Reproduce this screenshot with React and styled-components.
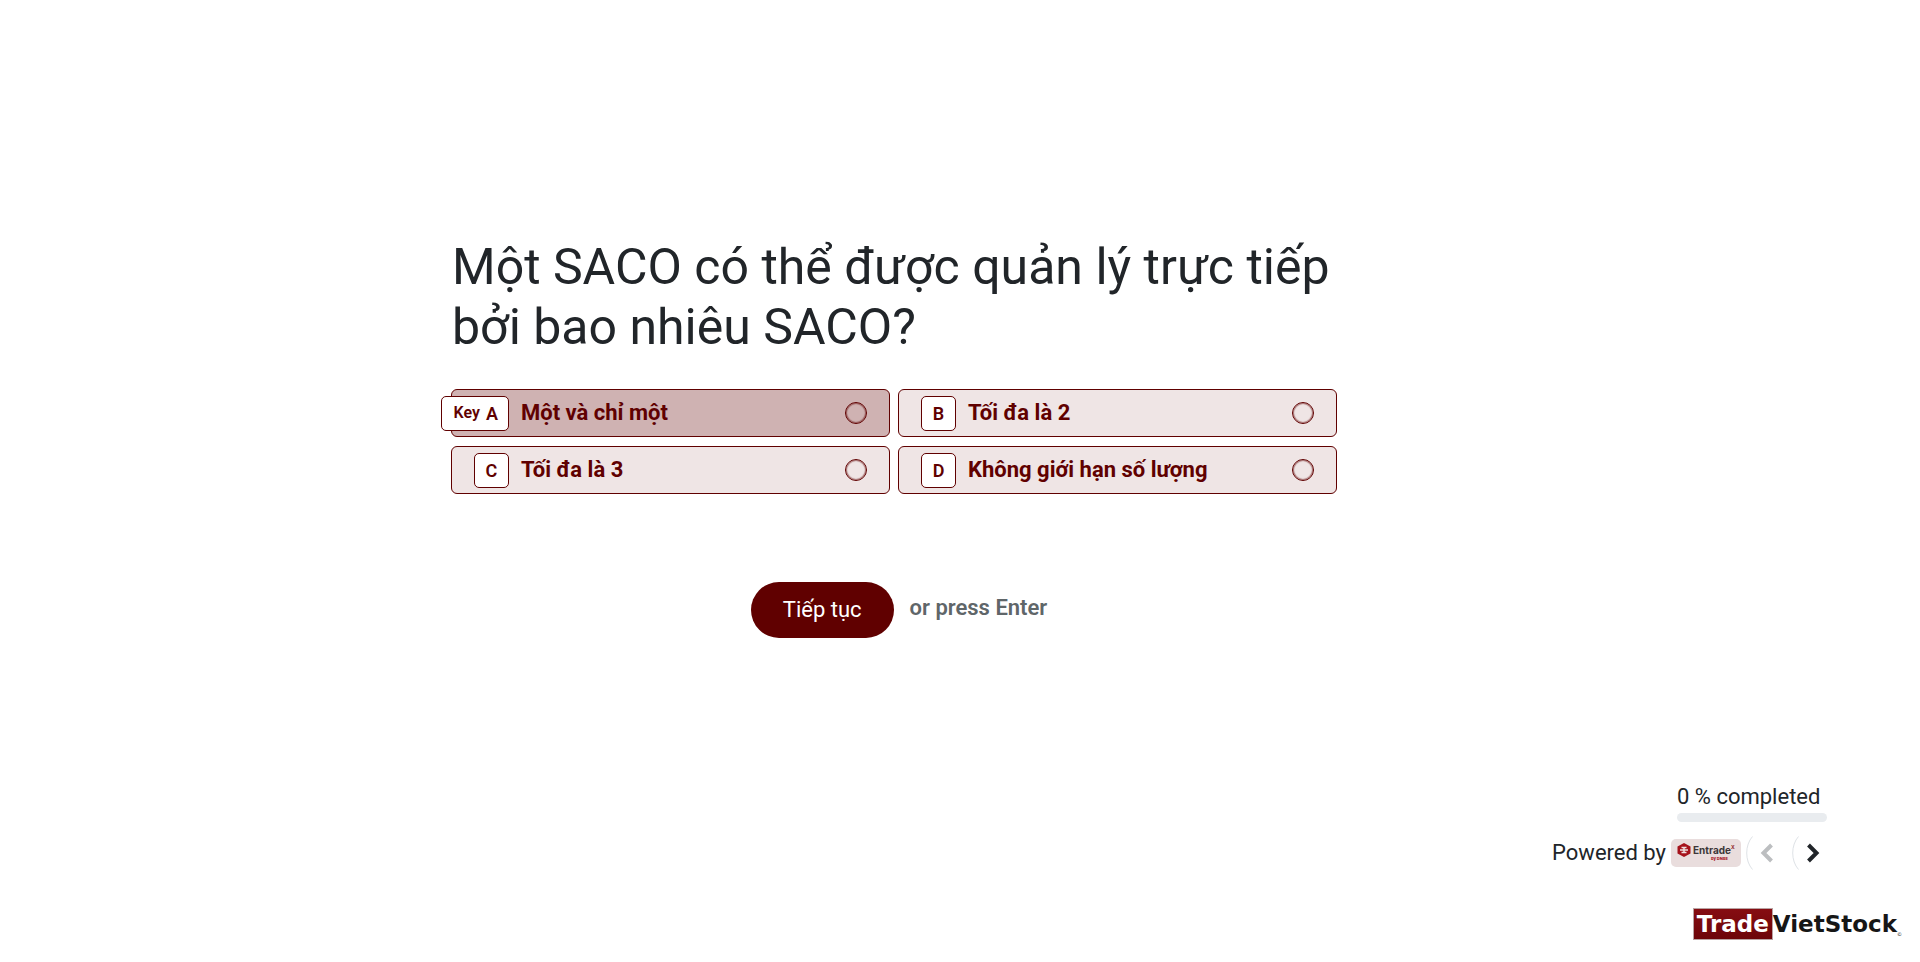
import React, { useState } from 'react'
import styled, { createGlobalStyle } from 'styled-components'

const GlobalStyle = createGlobalStyle`
  * {
    box-sizing: border-box;
  }
  body {
    margin: 0;
    background: #fff;
    color: #212529;
    font-family: Roboto, "Noto Sans", sans-serif;
    font-size: 22px;
    line-height: 32px;
  }
  button, input {
    font: inherit;
  }
`

const Page = styled.div`
  display: flex;
  flex-direction: column;
  min-height: 100vh;
`

const Survey = styled.main`
  flex: 1;
  padding: 237px 132px 32px 0;
`

const Form = styled.form`
  width: 100%;
  max-width: 886px;
  margin: 0 auto;
`

const Title = styled.h1`
  margin: 0 0 32px;
  padding: 0 1px;
  font-size: 50px;
  font-weight: 400;
  line-height: 60px;
`

const Answers = styled.div`
  display: grid;
  grid-template-columns: 1fr 1fr;
  gap: 9px 8px;
`

const Answer = styled.label`
  position: relative;
  display: flex;
  align-items: center;
  height: 48px;
  padding: 0 22px;
  border: 1px solid #600000;
  border-radius: 6px;
  background: ${({ $active }) => ($active ? '#cfb2b2' : '#efe5e5')};
  color: #600000;
  font-weight: 700;
  cursor: pointer;
`

const Key = styled.span`
  flex: none;
  width: 35px;
  height: 35px;
  border: 1px solid #600000;
  border-radius: 5px;
  background: #fff;
  font-size: 18px;
  font-weight: 600;
  line-height: 33px;
  text-align: center;
`

const WideKey = styled(Key)`
  position: absolute;
  left: -11px;
  display: flex;
  justify-content: flex-end;
  gap: 6px;
  width: 68px;
  padding-right: 10px;
`

const KeyHint = styled.small`
  font-size: 16px;
  line-height: 31px;
`

const AnswerText = styled.span`
  flex: 1;
  padding: 0 12px;
  margin-left: ${({ $shifted }) => ($shifted ? '35px' : '0')};
`

const Radio = styled.input`
  appearance: none;
  width: 22px;
  height: 22px;
  margin: 0;
  border: 1px solid #600000;
  border-radius: 50%;
  box-shadow: inset 0 0 1px 1px rgba(96, 0, 0, 0.5);
  &:checked {
    background: #600000;
  }
`

const Actions = styled.div`
  display: flex;
  align-items: center;
  justify-content: center;
  gap: 16px;
  margin-top: 88px;
  padding-left: 10px;
`

const Submit = styled.button`
  height: 56px;
  padding: 0 32px;
  border: 0;
  border-radius: 28px;
  background: #600000;
  color: #fff;
`

const EnterHint = styled.span`
  padding-bottom: 4px;
  color: #5f6669;
  font-weight: 600;
`

const Footer = styled.footer`
  display: flex;
  flex-direction: column;
  align-items: flex-end;
  padding: 0 18px 22px;
`

const Progress = styled.div`
  width: 150px;
  margin-right: 75px;
`

const Track = styled.div`
  height: 9px;
  border-radius: 5px;
  background: #e9ecef;
  overflow: hidden;
`

const Bar = styled.div`
  height: 100%;
  background: #600000;
`

const Powered = styled.div`
  display: flex;
  align-items: center;
  height: 34px;
  margin: 14px 75px 38px 0;
`

const Badge = styled.a`
  display: flex;
  align-items: center;
  width: 70px;
  height: 28px;
  margin: 0 5px;
  padding: 0 6px;
  border-radius: 5px;
  background: #e9dddd;
`

const Arrow = styled.button`
  display: flex;
  align-items: center;
  justify-content: flex-start;
  gap: 7px;
  width: 35px;
  height: 34px;
  margin-right: ${({ $last }) => ($last ? '0' : '11px')};
  padding: 0;
  border: 0;
  background: none;
  color: ${({ disabled }) => (disabled ? '#bcbec0' : '#212529')};
`

const Brand = styled.a`
  display: flex;
  align-items: center;
  color: #161616;
  font-family: "DejaVu Sans", sans-serif;
  font-size: 23px;
  font-weight: 700;
  line-height: 30px;
  text-decoration: none;
`

const BrandTag = styled.span`
  height: 32px;
  padding: 0 3px;
  border: 1px solid #b9a3a3;
  background: linear-gradient(#860d12, #6d0509);
  color: #fff;
`

const Copyright = styled.small`
  align-self: flex-end;
  font-size: 5px;
  font-weight: 400;
  line-height: 12px;
`

const answers = [
  { key: 'A', text: 'Một và chỉ một' },
  { key: 'B', text: 'Tối đa là 2' },
  { key: 'C', text: 'Tối đa là 3' },
  { key: 'D', text: 'Không giới hạn số lượng' },
]

const Arc = () => (
  <svg width="7" height="34" viewBox="0 0 7 34" fill="none" stroke="#dee2e6">
    <path d="M6.500 .5 C-1.200 9 -1.200 25 6.500 33.500" />
  </svg>
)

const Chevron = ({ flip }) => (
  <svg width="14" height="20" viewBox="0 0 14 20" fill="none" stroke="currentColor" strokeWidth="4">
    <path d={flip ? 'M11.5 2 L3.5 10 L11.5 18' : 'M2.5 2 L10.5 10 L2.5 18'} />
  </svg>
)

const EntradeLogo = () => (
  <svg width="58" height="22" viewBox="0 0 58 22">
    <path d="M7 1 L13.500 4.500 V11.500 L7 15 L.5 11.500 V4.500 Z" fill="#a5121b" />
    <path d="M4.500 5.500 H9.500 M4.500 10.500 H9.500 M3 8 H11 M7 5 V11" stroke="#eedfdf" strokeWidth="1.500" />
    <text x="16" y="12" fontFamily="Inter" fontSize="10" fontWeight="700" fill="#3c3638">Entrade</text>
    <text x="54" y="7" fontFamily="Inter" fontSize="5" fontWeight="700" fill="#8b1a22">X</text>
    <text x="34" y="18" fontFamily="Inter" fontSize="4" fontWeight="800" fill="#a5121b">by DNSE</text>
  </svg>
)

const App = () => {
  const [selected, setSelected] = useState('')
  const progress = 0

  return (
    <Page>
      <GlobalStyle />
      <Survey>
        <Form onSubmit={e => e.preventDefault()}>
          <Title>Một SACO có thể được quản lý trực tiếp bởi bao nhiêu SACO?</Title>
          <Answers>
            {answers.map(({ key, text }, index) => (
              <Answer key={key} $active={index === 0}>
                {index === 0
                  ? <WideKey><KeyHint>Key</KeyHint>{key}</WideKey>
                  : <Key>{key}</Key>
                }
                <AnswerText $shifted={index === 0}>{text}</AnswerText>
                <Radio
                  type="radio"
                  name="answer"
                  value={key}
                  checked={selected === key}
                  onChange={() => setSelected(key)}
                />
              </Answer>
            ))}
          </Answers>
          <Actions>
            <Submit type="submit">Tiếp tục</Submit>
            <EnterHint>or press Enter</EnterHint>
          </Actions>
        </Form>
      </Survey>
      <Footer>
        <Progress>
          {progress} % completed
          <Track><Bar style={{ width: `${progress}%` }} /></Track>
        </Progress>
        <Powered>
          Powered by
          <Badge href="#" aria-label="Entrade X"><EntradeLogo /></Badge>
          <Arrow type="button" aria-label="Previous" disabled><Arc /><Chevron flip /></Arrow>
          <Arrow type="button" aria-label="Next" $last><Arc /><Chevron /></Arrow>
        </Powered>
        <Brand href="#"><BrandTag>Trade</BrandTag>VietStock<Copyright>©</Copyright></Brand>
      </Footer>
    </Page>
  )
}

export default App
